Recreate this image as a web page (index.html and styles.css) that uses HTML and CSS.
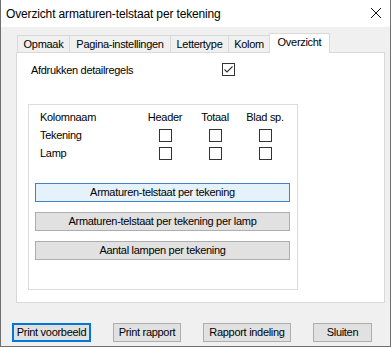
FILE: index.html
```html
<!DOCTYPE html>
<html>
<head>
<meta charset="utf-8">
<link rel="stylesheet" href="styles.css">
</head>
<body>
<div class="window">
  <div class="titlebar">
    <span class="title">Overzicht armaturen-telstaat per tekening</span>
    <svg class="close" width="12" height="12" viewBox="0 0 12 12"><path d="M1 1 L11 11 M11 1 L1 11" stroke="#111" stroke-width="1" fill="none"/></svg>
  </div>
  <div class="body">
    <div class="tabs">
      <div class="tab w1">Opmaak</div>
      <div class="tab w2">Pagina-instellingen</div>
      <div class="tab w3">Lettertype</div>
      <div class="tab w4">Kolom</div>
      <div class="tab sel w5">Overzicht</div>
    </div>
    <div class="panel">
      <div class="detail">
        <span class="detail-label">Afdrukken detailregels</span>
        <span class="cb"><svg width="11" height="11" viewBox="0 0 11 11"><path d="M1.5 5.5 L4 8 L9.5 2.5" stroke="#333" stroke-width="1.1" fill="none"/></svg></span>
      </div>
      <div class="group">
        <div class="grid">
          <span>Kolomnaam</span><span class="c">Header</span><span class="c">Totaal</span><span class="c">Blad sp.</span>
          <span>Tekening</span><span class="c"><span class="cb"></span></span><span class="c"><span class="cb"></span></span><span class="c"><span class="cb"></span></span>
          <span>Lamp</span><span class="c"><span class="cb"></span></span><span class="c"><span class="cb"></span></span><span class="c"><span class="cb"></span></span>
        </div>
        <div class="actions">
          <div class="btn wide hover">Armaturen-telstaat per tekening</div>
          <div class="btn wide">Armaturen-telstaat per tekening per lamp</div>
          <div class="btn wide">Aantal lampen per tekening</div>
        </div>
      </div>
    </div>
    <div class="footer">
      <div class="btn fb focus b1">Print voorbeeld</div>
      <div class="btn fb b2">Print rapport</div>
      <div class="btn fb b3">Rapport indeling</div>
      <div class="btn fb b4">Sluiten</div>
    </div>
  </div>
</div>
</body>
</html>
```
FILE: styles.css
```css
* { box-sizing: border-box; }
html, body { margin: 0; padding: 0; }
body {
  width: 391px;
  height: 347px;
  overflow: hidden;
  font-family: "Liberation Sans", Arial, sans-serif;
  font-size: 11px;
  color: #000;
  background: #f0f0f0;
}
.window {
  width: 391px;
  height: 347px;
  display: flex;
  flex-direction: column;
  border-left: 1px solid #6f6f6f;
  border-right: 1px solid #6f6f6f;
  border-bottom: 1px solid #6f6f6f;
  background: #f0f0f0;
}
.titlebar {
  height: 27px;
  flex: none;
  background: #fff;
  display: flex;
  align-items: center;
  justify-content: space-between;
  padding: 0 8px 0 5px;
}
.title {
  font-size: 12px;
  letter-spacing: -0.15px;
  margin-top: 1px;
}
.close { display: block; margin-bottom: 1px; }
.body {
  flex: 1;
  padding-top: 6px;
}
.tabs {
  height: 19px;
  display: flex;
  align-items: flex-end;
  padding-left: 16px;
}
.tab {
  height: 17px;
  border: 1px solid #d9d9d9;
  border-bottom: none;
  margin-right: -1px;
  background: #f0f0f0;
  text-align: center;
  line-height: 16px;
  white-space: nowrap;
  letter-spacing: -0.3px;
}
.tab.sel {
  height: 20px;
  margin-bottom: -1px;
  background: #fff;
  position: relative;
  z-index: 1;
  line-height: 17px;
}
.w1 { width: 53px; }
.w2 { width: 102px; }
.w3 { width: 59px; }
.w4 { width: 42px; }
.w5 { width: 61px; }
.panel {
  margin-left: 15px;
  width: 369px;
  height: 251px;
  border: 1px solid #d9d9d9;
  background: #fff;
  padding: 10px 0 0 11px;
}
.detail {
  display: flex;
  align-items: center;
  height: 13px;
  padding-left: 3px;
}
.detail-label {
  width: 191px;
  letter-spacing: -0.3px;
}
.cb {
  display: inline-flex;
  align-items: center;
  justify-content: center;
  width: 13px;
  height: 13px;
  border: 1px solid #333;
  background: #fff;
}
.cb svg { display: block; }
.group {
  margin-top: 28px;
  width: 270px;
  height: 186px;
  border: 1px solid #dcdcdc;
  padding: 3px 0 0 6px;
}
.grid {
  display: grid;
  grid-template-columns: 100px 50px 50px 50px;
  grid-auto-rows: 18px;
  align-items: center;
  padding-left: 5px;
  letter-spacing: -0.3px;
}
.grid .c {
  display: flex;
  justify-content: center;
}
.actions {
  margin-top: 21px;
  display: flex;
  flex-direction: column;
  gap: 10px;
}
.btn {
  background: #e1e1e1;
  border: 1px solid #adadad;
  text-align: center;
  white-space: nowrap;
  letter-spacing: -0.3px;
}
.btn.wide {
  width: 255px;
  height: 19px;
  line-height: 17px;
}
.btn.hover {
  background: #e5f1fb;
  border-color: #3d83c6;
}
.footer {
  margin-top: 20px;
  margin-left: 11px;
  display: flex;
  gap: 22px;
}
.btn.fb {
  height: 19px;
  line-height: 17px;
}
.btn.focus {
  border: 2px solid #0078d7;
  line-height: 15px;
}
.b1 { width: 79px; }
.b2 { width: 68px; }
.b3 { width: 88px; }
.b4 { width: 59px; }
```
